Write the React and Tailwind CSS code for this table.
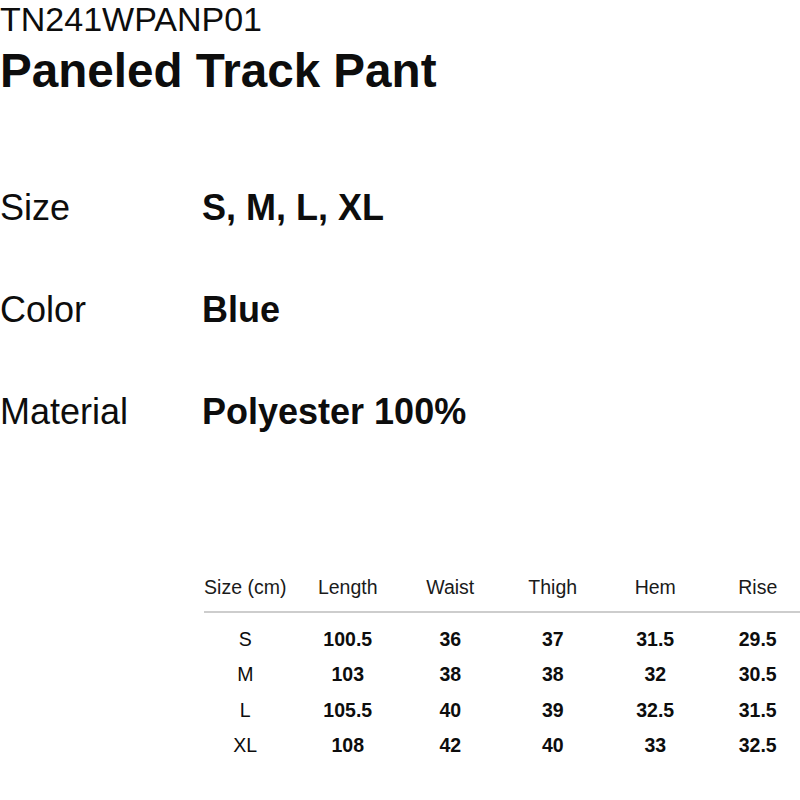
export default function App() {
  const rows = [
    ["S", "100.5", "36", "37", "31.5", "29.5"],
    ["M", "103", "38", "38", "32", "30.5"],
    ["L", "105.5", "40", "39", "32.5", "31.5"],
    ["XL", "108", "42", "40", "33", "32.5"],
  ];
  const headers = ["Size (cm)", "Length", "Waist", "Thigh", "Hem", "Rise"];
  const specs = [
    ["Size", "S, M, L, XL"],
    ["Color", "Blue"],
    ["Material", "Polyester 100%"],
  ];
  return (
    <div
      className="w-[800px] h-[800px] bg-white overflow-hidden text-[#0d0d0d]"
      style={{ fontFamily: '"Liberation Sans", Arial, sans-serif' }}
    >
      <div>
        <div className="text-[34px] leading-[38px]">TN241WPANP01</div>
        <div className="mt-[9px] text-[47.6px] leading-[47px] font-bold">Paneled Track Pant</div>
      </div>
      <div className="mt-[96px] flex flex-col gap-[67px]">
        {specs.map(([k, v]) => (
          <div key={k} className="grid grid-cols-[202px_1fr] text-[36px] leading-[35px]">
            <div>{k}</div>
            <div className="font-bold">{v}</div>
          </div>
        ))}
      </div>
      <div className="mt-[148px]">
        <div className="ml-[194px] grid grid-cols-[repeat(6,102.5px)] text-[19.5px] leading-[20px] text-[#1a1a1a]">
          {headers.map((h) => (
            <div key={h} className="text-center whitespace-nowrap">{h}</div>
          ))}
        </div>
        <div className="ml-[204px] mt-[14px] h-[2px] bg-[#cdcdcd]" />
        <div className="mt-[16px] flex flex-col gap-[15.3px]">
          {rows.map((r) => (
            <div key={r[0]} className="ml-[194px] grid grid-cols-[repeat(6,102.5px)] text-[19.5px] leading-[20px]">
              {r.map((c, i) => (
                <div key={i} className={"text-center " + (i === 0 ? "font-normal" : "font-bold")}>
                  {c}
                </div>
              ))}
            </div>
          ))}
        </div>
      </div>
    </div>
  );
}
